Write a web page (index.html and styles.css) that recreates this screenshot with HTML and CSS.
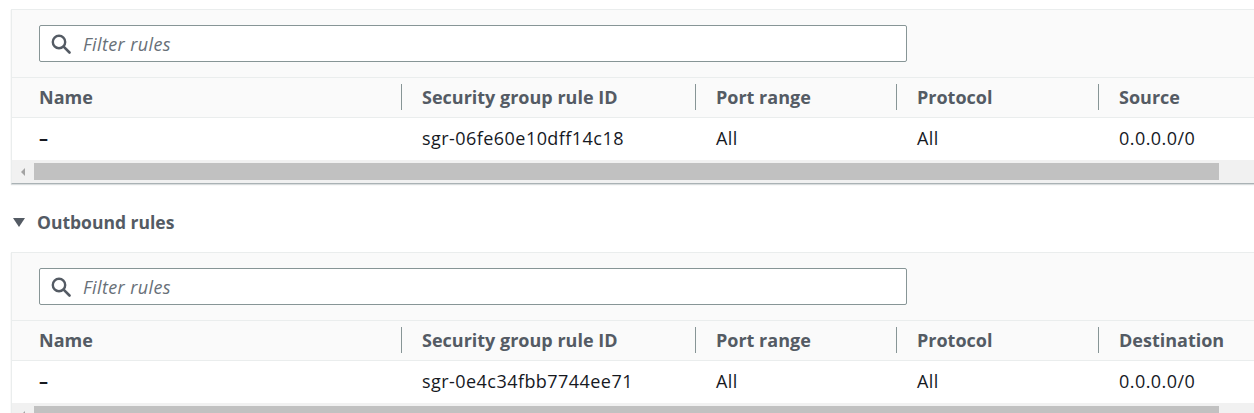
FILE: index.html
```html
<!DOCTYPE html>
<html lang="en">
<head>
<meta charset="utf-8">
<title>Security group rules</title>
<link rel="stylesheet" href="styles.css">
</head>
<body>
<div class="page">
  <section class="panel">
    <div class="toolbar">
      <div class="search">
        <svg class="search-icon" width="20" height="20" viewBox="0 0 20 20"><circle cx="8" cy="8" r="6.2" fill="none" stroke="#545b64" stroke-width="2.4"/><line x1="12.6" y1="12.6" x2="18.5" y2="18.5" stroke="#545b64" stroke-width="2.6" stroke-linecap="round"/></svg>
        <span class="placeholder">Filter rules</span>
      </div>
    </div>
    <div class="grid head">
      <div class="cell first">Name</div>
      <div class="cell"><span class="divider"></span>Security group rule ID</div>
      <div class="cell"><span class="divider"></span>Port range</div>
      <div class="cell"><span class="divider"></span>Protocol</div>
      <div class="cell"><span class="divider"></span>Source</div>
    </div>
    <div class="grid row">
      <div class="cell first"><span class="dash">–</span></div>
      <div class="cell val">sgr-06fe60e10dff14c18</div>
      <div class="cell val">All</div>
      <div class="cell val">All</div>
      <div class="cell val">0.0.0.0/0</div>
    </div>
    <div class="scrollbar">
      <span class="arrow"></span>
      <span class="thumb"></span>
    </div>
  </section>

  <h2 class="section-title"><span class="caret"></span>Outbound rules</h2>

  <section class="panel">
    <div class="toolbar">
      <div class="search">
        <svg class="search-icon" width="20" height="20" viewBox="0 0 20 20"><circle cx="8" cy="8" r="6.2" fill="none" stroke="#545b64" stroke-width="2.4"/><line x1="12.6" y1="12.6" x2="18.5" y2="18.5" stroke="#545b64" stroke-width="2.6" stroke-linecap="round"/></svg>
        <span class="placeholder">Filter rules</span>
      </div>
    </div>
    <div class="grid head">
      <div class="cell first">Name</div>
      <div class="cell"><span class="divider"></span>Security group rule ID</div>
      <div class="cell"><span class="divider"></span>Port range</div>
      <div class="cell"><span class="divider"></span>Protocol</div>
      <div class="cell"><span class="divider"></span>Destination</div>
    </div>
    <div class="grid row">
      <div class="cell first"><span class="dash">–</span></div>
      <div class="cell val">sgr-0e4c34fbb7744ee71</div>
      <div class="cell val">All</div>
      <div class="cell val">All</div>
      <div class="cell val">0.0.0.0/0</div>
    </div>
    <div class="scrollbar">
      <span class="arrow"></span>
      <span class="thumb"></span>
    </div>
  </section>
</div>
</body>
</html>
```

FILE: styles.css
```css
html, body {
  margin: 0;
  padding: 0;
  background: #ffffff;
  overflow: hidden;
}
body {
  font-family: "Open Sans", "Noto Sans", Arial, sans-serif;
  font-size: 18px;
  color: #16191f;
}
.page {
  padding-top: 9px;
  width: 1320px;
}
.panel {
  margin-left: 11px;
  width: 1290px;
  border: 1px solid #eaeded;
  border-bottom: 1px solid #aab2b5;
  background: #fafafa;
  box-shadow: 0 1px 1px rgba(0, 28, 36, 0.15);
}
.toolbar {
  padding: 15px 0 15px 27px;
}
.search {
  box-sizing: border-box;
  width: 868px;
  height: 37px;
  border: 1px solid #879596;
  border-radius: 2px;
  background: #ffffff;
  display: flex;
  align-items: center;
  padding-left: 11px;
  gap: 12px;
}
.search-icon {
  flex: none;
  margin-top: 1px;
}
.placeholder {
  font-style: italic;
  color: #687078;
  letter-spacing: 0.4px;
}
.grid {
  display: grid;
  grid-template-columns: 389px 294px 201px 202px 1fr;
}
.head {
  box-sizing: border-box;
  height: 41px;
  padding-bottom: 2px;
  border-top: 1px solid #eaeded;
  border-bottom: 1px solid #eaeded;
  font-weight: 700;
  color: #545b64;
}
.row {
  box-sizing: border-box;
  height: 42px;
  padding-bottom: 2px;
  background: #ffffff;
  letter-spacing: 0.45px;
}
.cell {
  display: flex;
  align-items: center;
  white-space: nowrap;
}
.cell.first {
  padding-left: 27px;
}
.dash {
  font-weight: 700;
  color: #16191f;
}
.divider {
  width: 1px;
  height: 26px;
  background: #879596;
  margin-right: 20px;
  flex: none;
}
.row .cell.val {
  padding-left: 21px;
}
.scrollbar {
  height: 23px;
  background: #f1f1f1;
  display: flex;
  align-items: center;
}
.arrow {
  width: 0;
  height: 0;
  border-top: 4px solid transparent;
  border-bottom: 4px solid transparent;
  border-right: 4px solid #a3a3a3;
  margin-left: 9px;
  flex: none;
}
.thumb {
  height: 17px;
  width: 1185px;
  margin-left: 9px;
  background: #c1c1c1;
  flex: none;
}
.section-title {
  margin: 26px 0 18px 0;
  height: 24px;
  display: flex;
  align-items: center;
  font-size: 17.5px;
  font-weight: 700;
  color: #545b64;
}
.caret {
  width: 0;
  height: 0;
  border-left: 6.5px solid transparent;
  border-right: 6.5px solid transparent;
  border-top: 9px solid #545b64;
  margin-left: 13px;
  margin-right: 12px;
}
```
